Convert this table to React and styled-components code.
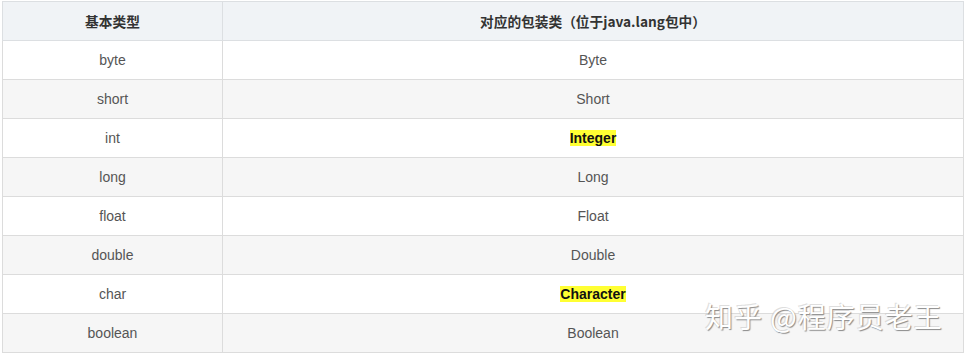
import React from 'react';
import styled, { createGlobalStyle } from 'styled-components';

const GlobalStyle = createGlobalStyle`
    html, body {
        margin: 0;
        padding: 0;
        background: #ffffff;
    }
    body {
        font-family: "Liberation Sans", Arial, "Noto Sans CJK SC", sans-serif;
    }
`;

const Page = styled.div`
    position: relative;
    width: 965px;
    height: 353px;
    padding: 1px 0 0 2px;
    box-sizing: border-box;
    overflow: hidden;
`;

const Table = styled.table`
    border-collapse: collapse;
    width: 962px;
    table-layout: fixed;
    font-size: 14px;
    color: #555;
`;

const HeadCell = styled.th`
    height: 38px;
    padding: 0;
    background: #f0f3f6;
    border: 1px solid #dcdfe2;
    color: #333;
    font-weight: bold;
    font-size: 13.7px;
    text-align: center;
    font-family: "Noto Sans CJK SC", "Liberation Sans", sans-serif;
`;

const Row = styled.tr`
    background: ${p => p.striped ? '#f6f6f6' : '#ffffff'};
`;

const Cell = styled.td`
    height: 38px;
    padding: 0;
    border: 1px solid #dcdcdc;
    text-align: center;
`;

const Mark = styled.strong`
    background: #ffff33;
    color: #111;
    font-weight: bold;
`;

const Watermark = styled.div`
    position: absolute;
    left: 705px;
    top: 296px;
    font-family: "Noto Sans CJK SC", sans-serif;
    font-size: 28px;
    letter-spacing: 1px;
    color: #ffffff;
    text-shadow: 1px 1px 1px #8a8a8a, -1px -1px 0 rgba(200,200,200,0.6);
    white-space: nowrap;
`;

const rows = [
    ['byte', 'Byte'],
    ['short', 'Short'],
    ['int', 'Integer', true],
    ['long', 'Long'],
    ['float', 'Float'],
    ['double', 'Double'],
    ['char', 'Character', true],
    ['boolean', 'Boolean'],
];

export default function App() {
    return (
        <>
            <GlobalStyle />
            <Page>
                <Table>
                    <colgroup>
                        <col style={{ width: 220 }} />
                        <col />
                    </colgroup>
                    <thead>
                        <tr>
                            <HeadCell>基本类型</HeadCell>
                            <HeadCell>对应的包装类（位于java.lang包中）</HeadCell>
                        </tr>
                    </thead>
                    <tbody>
                        {rows.map(([prim, wrap, hl], i) => (
                            <Row key={prim} striped={i % 2 === 1}>
                                <Cell>{prim}</Cell>
                                <Cell>{hl ? <Mark>{wrap}</Mark> : wrap}</Cell>
                            </Row>
                        ))}
                    </tbody>
                </Table>
                <Watermark>知乎 @程序员老王</Watermark>
            </Page>
        </>
    );
}
